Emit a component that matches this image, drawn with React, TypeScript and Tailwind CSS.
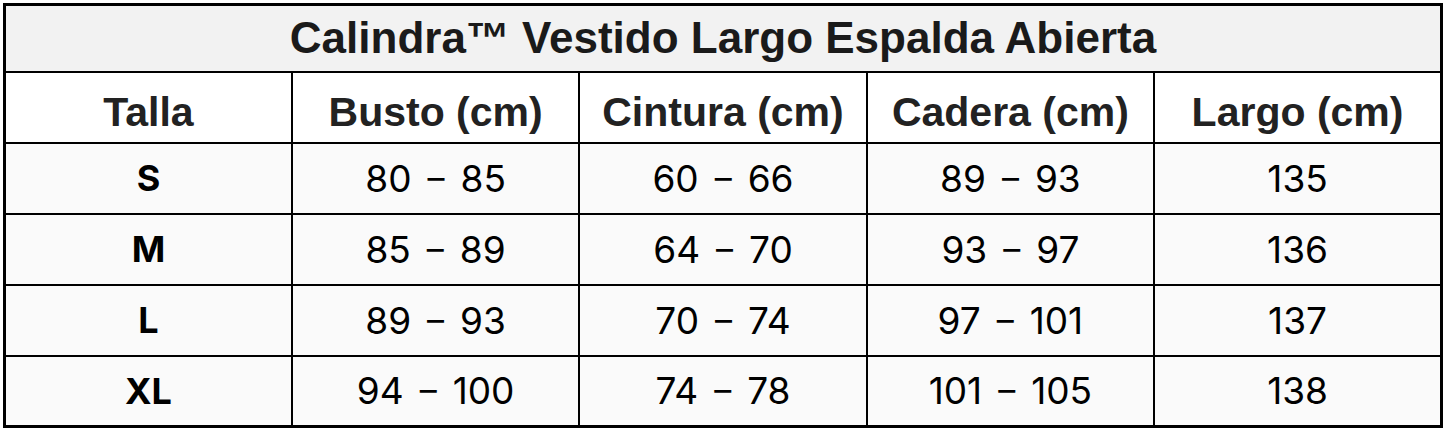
const headers = ["Talla", "Busto (cm)", "Cintura (cm)", "Cadera (cm)", "Largo (cm)"];

const rows = [
  ["S", "80 – 85", "60 – 66", "89 – 93", "135"],
  ["M", "85 – 89", "64 – 70", "93 – 97", "136"],
  ["L", "89 – 93", "70 – 74", "97 – 101", "137"],
  ["XL", "94 – 100", "74 – 78", "101 – 105", "138"],
];

function Range({ value }: { value: string }) {
  const parts = value.split(" – ");
  if (parts.length < 2) return <>{value}</>;
  return (
    <>
      {parts[0]}
      <span className="mx-[16px] inline-block text-[34px] align-[2px]">–</span>
      {parts[1]}
    </>
  );
}

export default function App() {
  return (
    <div className="w-[1445px] h-[430px] bg-white pl-[3px] pt-[3px]">
      <table className="w-[1440px] table-fixed border-collapse border-[3px] border-black">
        <thead>
          <tr className="h-[67px] bg-[#f2f2f2]">
            <th
              colSpan={5}
              className="border-2 border-black p-0 text-center text-[44px] leading-none font-bold text-[#1a1a1a] font-['Liberation_Sans',Arial,sans-serif]"
            >
              Calindra™ Vestido Largo Espalda Abierta
            </th>
          </tr>
          <tr className="h-[71px] bg-white">
            {headers.map((h) => (
              <th
                key={h}
                className="border-2 border-black p-0 pt-[10px] text-center text-[41px] leading-none font-bold text-[#222] font-['Liberation_Sans',Arial,sans-serif]"
              >
                {h}
              </th>
            ))}
          </tr>
        </thead>
        <tbody>
          {rows.map((r) => (
            <tr key={r[0]} className="h-[71px] bg-[#fafafa]">
              {r.map((c, i) => (
                <td
                  key={i}
                  className={
                    i === 0
                      ? "border-2 border-black p-0 text-center text-[36px] leading-none font-bold text-black font-['Inter',sans-serif]"
                      : "border-2 border-black p-0 text-center text-[37px] leading-none text-black font-['Inter',sans-serif] whitespace-nowrap"
                  }
                >
                  {i === 0 ? c : <Range value={c} />}
                </td>
              ))}
            </tr>
          ))}
        </tbody>
      </table>
    </div>
  );
}
